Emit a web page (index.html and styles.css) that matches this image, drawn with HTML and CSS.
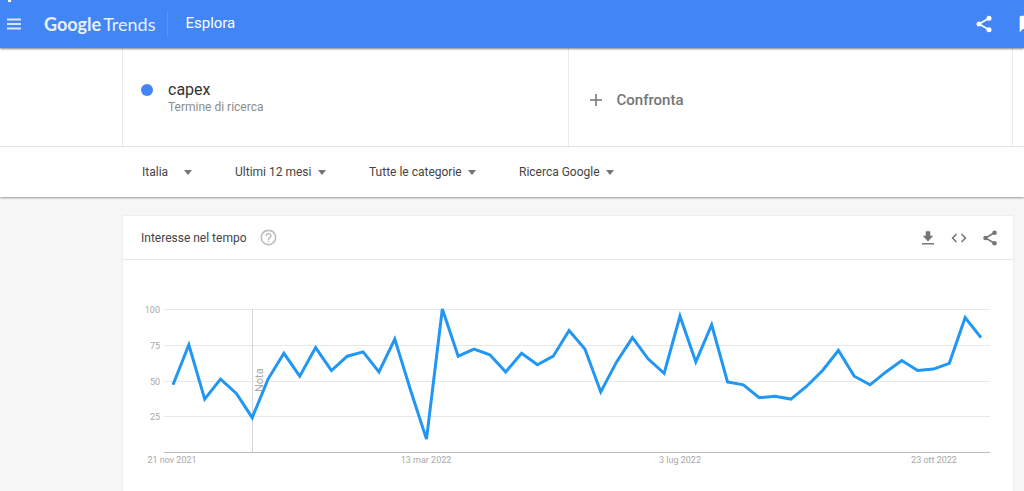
FILE: index.html
```html
<!DOCTYPE html>
<html lang="it">
<head>
<meta charset="UTF-8">
<meta name="viewport" content="width=device-width, initial-scale=1">
<title>capex - Esplora - Google Trends</title>
<link rel="stylesheet" href="styles.css">
</head>
<body>

<header class="topbar">
	<span class="tick"></span>
	<button class="icon-btn menu" type="button" aria-label="Menu">
		<svg width="14" height="14" viewBox="0 0 14 14"><path d="M0 2.5h14M0 7h14M0 11.5h14" stroke="currentColor" stroke-width="2"/></svg>
	</button>
	<a class="logo" href="#"><b>Google</b><span>Trends</span></a>
	<h1 class="section">Esplora</h1>
	<div class="topbar-actions">
		<button class="icon-btn" type="button" aria-label="Condividi">
			<svg width="20" height="20" viewBox="0 0 24 24"><use href="#share"/></svg>
		</button>
		<button class="icon-btn" type="button" aria-label="Invia feedback">
			<svg width="20" height="20" viewBox="0 0 24 24"><path fill="currentColor" d="M20 2H4c-1.100 0-2 .9-2 2v18l4-4h14c1.100 0 2-.9 2-2V4c0-1.100-.9-2-2-2z"/></svg>
		</button>
	</div>
</header>

<section class="terms">
	<div class="term">
		<span class="dot"></span>
		<div>
			<h2 class="term-name">capex</h2>
			<p class="term-type">Termine di ricerca</p>
		</div>
	</div>
	<button class="compare" type="button">
		<svg width="12" height="12" viewBox="0 0 12 12"><path d="M6 0v12M0 6h12" stroke="currentColor" stroke-width="1.500"/></svg>
		Confronta
	</button>
</section>

<form class="filters">
	<select class="filter" aria-label="Paese"><option>Italia</option></select>
	<select class="filter" aria-label="Periodo"><option>Ultimi 12 mesi</option></select>
	<select class="filter" aria-label="Categoria"><option>Tutte le categorie</option></select>
	<select class="filter" aria-label="Tipo di ricerca"><option>Ricerca Google</option></select>
</form>

<main class="card">
	<div class="card-head">
		<h2 class="card-title">Interesse nel tempo</h2>
		<button class="icon-btn help" type="button" aria-label="Guida">
			<svg width="19" height="19" viewBox="0 0 24 24"><path fill="currentColor" d="M11 18h2v-2h-2v2zm1-16C6.480 2 2 6.480 2 12s4.480 10 10 10 10-4.480 10-10S17.520 2 12 2zm0 18c-4.410 0-8-3.590-8-8s3.590-8 8-8 8 3.590 8 8-3.590 8-8 8zm0-14c-2.210 0-4 1.790-4 4h2c0-1.100.9-2 2-2s2 .9 2 2c0 2-3 1.750-3 5h2c0-2.250 3-2.500 3-5 0-2.210-1.790-4-4-4z"/></svg>
		</button>
		<div class="card-actions">
			<button class="icon-btn" type="button" aria-label="Scarica CSV">
				<svg width="18" height="18" viewBox="0 0 24 24"><path fill="currentColor" d="M19 9h-4V3H9v6H5l7 7.500zM4 18.500v2h16v-2z"/></svg>
			</button>
			<button class="icon-btn" type="button" aria-label="Incorpora">
				<svg width="18" height="18" viewBox="0 0 24 24"><path fill="currentColor" d="M9.400 16.600L4.800 12l4.600-4.600L8 6l-6 6 6 6zm5.200 0l4.600-4.600-4.600-4.600L16 6l6 6-6 6z"/></svg>
			</button>
			<button class="icon-btn" type="button" aria-label="Condividi">
				<svg width="18" height="18" viewBox="0 0 24 24"><use href="#share"/></svg>
			</button>
		</div>
	</div>

	<svg class="chart" viewBox="0 0 890 231" role="img" aria-label="Interesse nel tempo">
		<path class="grid" d="M41 49.500H867M41 85.500H867M41 121.500H867M41 156.500H867"/>
		<path class="axis" d="M41 192.500H867"/>
		<path class="note-line" d="M129.500 49V192"/>
		<g class="values">
			<text x="37" y="53">100</text>
			<text x="37" y="89">75</text>
			<text x="37" y="125">50</text>
			<text x="37" y="160">25</text>
		</g>
		<g class="dates">
			<text x="49" y="203">21 nov 2021</text>
			<text x="303" y="203">13 mar 2022</text>
			<text x="557" y="203">3 lug 2022</text>
			<text x="811" y="203">23 ott 2022</text>
		</g>
		<text class="note" transform="translate(140 132) rotate(-90)">Nota</text>
		<!-- one unit per week, y = 100 - value -->
		<svg x="50" y="49" width="808" height="143" viewBox="0 0 51 100" preserveAspectRatio="none" overflow="visible">
			<polyline class="line" points="0,53 1,25 2,63 3,49 4,59 5,76 6,49 7,31 8,47 9,27 10,43 11,33 12,30 13,44 14,21 15,57 16,91 17,0 18,33 19,28 20,32 21,44 22,31 23,39 24,33 25,15 26,28 27,58 28,37 29,20 30,35 31,45 32,5 33,37 34,11 35,51 36,53 37,62 38,61 39,63 40,54 41,43 42,29 43,47 44,53 45,44 46,36 47,43 48,42 49,38 50,6 51,20"/>
		</svg>
	</svg>
</main>

<svg class="symbols" width="0" height="0">
	<symbol id="share" viewBox="0 0 24 24">
		<path d="M18 5L6 12l12 7" fill="none" stroke="currentColor" stroke-width="2"/>
		<g fill="currentColor"><circle cx="18" cy="5" r="3"/><circle cx="6" cy="12" r="3"/><circle cx="18" cy="19" r="3"/></g>
	</symbol>
</svg>

</body>
</html>
```
FILE: styles.css
```css
* {
	box-sizing: border-box;
}

body {
	margin: 0;
	background-color: #f6f6f6;
	color: #444;
	font-family: Roboto, "Liberation Sans", sans-serif;
	font-size: 12px;
}

h1, h2, p {
	margin: 0;
	font-weight: normal;
}

button, select {
	border: none;
	padding: 0;
	background: none;
	color: inherit;
	font: inherit;
	cursor: pointer;
}

.icon-btn {
	display: flex;
	flex-shrink: 0;
}

.symbols {
	position: absolute;
}

/* top bar */
.topbar {
	position: relative;
	display: flex;
	align-items: center;
	height: 48px;
	padding-left: 7px;
	background-color: #4285f4;
	color: #fff;
	box-shadow: 0 1px 2px rgba(0, 0, 0, .5);
	overflow-x: clip;
}

.tick {
	position: absolute;
	top: 0;
	left: 8px;
	width: 3px;
	height: 2px;
	background-color: #fff;
}

.menu {
	color: #d9e7fd;
}

.logo {
	display: flex;
	gap: 2px;
	margin-left: 23px;
	color: #e8f0fe;
	font-family: Lato, sans-serif;
	font-size: 18px;
	text-decoration: none;
}

.section {
	height: 24px;
	margin-left: 12px;
	padding-left: 17px;
	border-left: 1px solid #5b95f5;
	font-size: 15px;
	line-height: 22px;
}

.topbar-actions {
	display: flex;
	gap: 24px;
	margin-left: auto;
	margin-right: -14px;
}

/* search terms */
.terms {
	display: grid;
	grid-template-columns: 1fr 1fr;
	height: 99px;
	padding: 0 11px 0 122px;
	background-color: #fff;
	border-bottom: 1px solid #ebebeb;
}

.term {
	display: flex;
	gap: 15px;
	padding: 33px 18px;
	border-left: 1px solid #ebebeb;
}

.dot {
	width: 12px;
	height: 12px;
	margin-top: 3px;
	border-radius: 50%;
	background-color: #4285f4;
}

.term-name {
	color: #333;
	font-size: 16px;
	line-height: 18px;
}

.term-type {
	color: #8c8c8c;
	line-height: 16px;
}

.compare {
	display: flex;
	align-items: center;
	gap: 15px;
	padding: 4px 21px 0;
	border: solid #ebebeb;
	border-width: 0 1px;
	color: #757575;
	font-size: 15px;
	font-weight: 500;
}

/* filters */
.filters {
	display: flex;
	align-items: center;
	gap: 43px;
	height: 50px;
	padding-left: 142px;
	background-color: #fff;
	box-shadow: 0 1px 2px rgba(0, 0, 0, .4);
}

.filter {
	appearance: none;
	min-width: 50px;
	padding-right: 14px;
	background: url("data:image/svg+xml,%3Csvg xmlns='http://www.w3.org/2000/svg' width='8' height='5'%3E%3Cpath d='M0 0h8L4 5z' fill='%23757575'/%3E%3C/svg%3E") no-repeat right center;
}

/* chart card */
.card {
	margin: 19px 11px 0 123px;
	background-color: #fff;
	box-shadow: 0 0 1px rgba(0, 0, 0, .2);
}

.card-head {
	display: flex;
	align-items: center;
	height: 44px;
	padding: 0 14px 0 18px;
	border-bottom: 1px solid #e8e8e8;
}

.card-title {
	font-size: 12px;
}

.help {
	margin-left: 12px;
	color: #bdbdbd;
}

.card-actions {
	display: flex;
	gap: 13px;
	margin-left: auto;
	color: #757575;
}

.chart {
	display: block;
	width: 100%;
}

.grid, .axis, .note-line {
	fill: none;
	stroke: #e8e8e8;
}

.axis {
	stroke: #bdbdbd;
}

.note-line {
	stroke: #d5d5d5;
}

.values, .dates {
	fill: #a8a8a8;
	font-size: 9px;
	text-anchor: end;
}

.dates {
	text-anchor: middle;
}

.note {
	fill: #aaa;
	font-size: 11px;
}

.line {
	fill: none;
	stroke: #2196f3;
	stroke-width: 3px;
	vector-effect: non-scaling-stroke;
}
```
